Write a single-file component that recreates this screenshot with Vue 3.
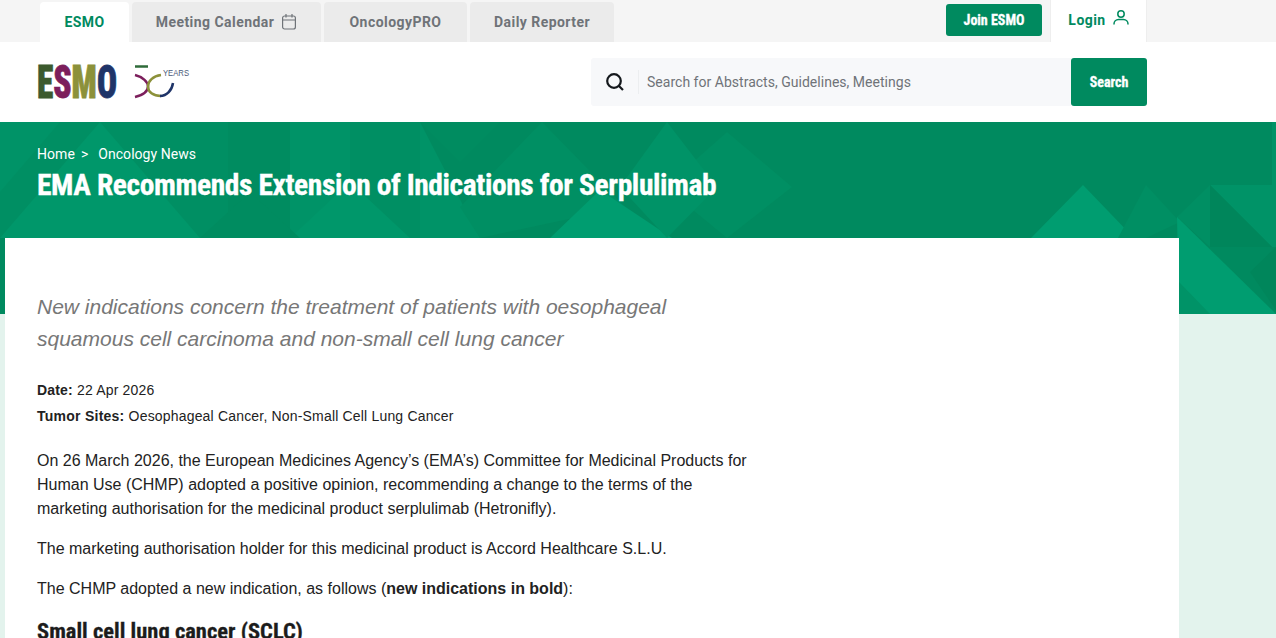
<template>
  <div class="page">
    <div class="topbar">
      <div class="tabs">
        <a class="tab active">ESMO</a>
        <a class="tab cal">Meeting Calendar
          <svg width="16" height="18" viewBox="0 0 16 18" fill="none" stroke="#6f7378" stroke-width="1.2">
            <rect x="1.6" y="3" width="12.8" height="13" rx="2" />
            <path d="M1.6 7h12.8M5 1v3.4M11 1v3.4" />
          </svg>
        </a>
        <a class="tab oncology">OncologyPRO</a>
        <a class="tab reporter">Daily Reporter</a>
      </div>
      <div class="top-right">
        <button class="join narrow">Join ESMO</button>
        <a class="login">Login
          <svg class="user" width="16" height="15" viewBox="0 0 16 15" fill="none" stroke="#008a5f" stroke-width="1.5">
            <circle cx="8" cy="4" r="3.200" />
            <path d="M1 14.500V14c0-2.500 2-4.500 4.500-4.500h5c2.500 0 4.500 2 4.500 4.500v.5" />
          </svg>
        </a>
      </div>
    </div>

    <header class="header">
      <div class="logo">
        <svg class="logo-svg" width="154" height="36" viewBox="0 0 154 36">
          <text x="0" y="34" class="mark" textLength="80" lengthAdjust="spacingAndGlyphs"><tspan fill="#3c5a2e" stroke="#3c5a2e">E</tspan><tspan fill="#7c1f5c" stroke="#7c1f5c">S</tspan><tspan fill="#8c913a" stroke="#8c913a">M</tspan><tspan fill="#1f3468" stroke="#1f3468">O</tspan></text>
          <path d="M98 2.500h13" stroke="#2f6b3a" stroke-width="2.500" />
          <path d="M98 11c8 2 13 7 13 11.500S106 31 98 33" fill="none" stroke="#7c1f5c" stroke-width="2.500" />
          <path d="M124 11c-8 1-13 6-13 11.500S116 32 124 32" fill="none" stroke="#8c913a" stroke-width="2.500" />
          <path d="M136 19c-1 7-6 13-13 13" fill="none" stroke="#1f3468" stroke-width="2.500" />
          <text x="126" y="12" class="years" textLength="26" lengthAdjust="spacingAndGlyphs">YEARS</text>
        </svg>
      </div>
      <div class="search">
        <div class="search-box">
          <span class="search-icon">
            <svg width="20" height="20" viewBox="0 0 20 20" fill="none" stroke="#14181c" stroke-width="2.200">
              <circle cx="9" cy="9" r="6.800" />
              <path d="M13.500 13.500L18 18" />
            </svg>
          </span>
          <input class="search-input" placeholder="Search for Abstracts, Guidelines, Meetings" />
        </div>
        <button class="search-btn narrow">Search</button>
      </div>
    </header>

    <section class="hero">
      <svg class="pattern" width="1276" height="192" viewBox="0 0 1276 192">
        <polygon v-for="(p, i) in shapes" :key="i" :points="p.pts" :fill="p.fill" />
      </svg>
      <div class="hero-text">
        <div class="crumbs"><span>Home</span><span class="sep">&gt;</span><span>Oncology News</span></div>
        <h1 class="narrow">EMA Recommends Extension of Indications for Serplulimab</h1>
      </div>
    </section>

    <main class="card">
      <p class="lead">New indications concern the treatment of patients with oesophageal squamous cell carcinoma and non-small cell lung cancer</p>
      <div class="meta"><b>Date:</b> 22 Apr 2026</div>
      <div class="meta sites"><b>Tumor Sites:</b> Oesophageal Cancer, Non-Small Cell Lung Cancer</div>
      <div class="body">
        <p>On 26 March 2026, the European Medicines Agency’s (EMA’s) Committee for Medicinal Products for Human Use (CHMP) adopted a positive opinion, recommending a change to the terms of the marketing authorisation for the medicinal product serplulimab (Hetronifly).</p>
        <p>The marketing authorisation holder for this medicinal product is Accord Healthcare S.L.U.</p>
        <p>The CHMP adopted a new indication, as follows (<b>new indications in bold</b>):</p>
        <h2 class="narrow">Small cell lung cancer (SCLC)</h2>
      </div>
    </main>
  </div>
</template>

<script setup>
const light = '#009d70'
const faint = '#00976a'
const mid = '#009367'
const soft = '#008f63'
const shade = '#008c60'
const dark = '#00865b'

const shapes = [
  // left group
  { pts: '0,0 420,0 420,116 0,116', fill: soft },
  { pts: '100,0 200,116 0,116', fill: faint },
  { pts: '0,0 60,0 0,70', fill: mid },
  { pts: '228,0 290,0 290,116 228,116', fill: shade },
  { pts: '290,0 350,0 350,116 290,116', fill: mid },
  { pts: '350,60 410,116 290,116', fill: faint },
  { pts: '200,116 250,70 300,116', fill: shade },
  // middle group
  { pts: '420,0 500,0 460,40', fill: shade },
  { pts: '420,0 420,116 480,116', fill: mid },
  { pts: '542,0 625,85 480,116 460,85', fill: soft },
  { pts: '600,68 672,116 550,116', fill: light },
  { pts: '727,10 792,65 727,116 665,65', fill: soft },
  { pts: '667,0 717,65 667,116 620,65', fill: mid },
  // right group
  { pts: '1083,63 1134,116 1031,116', fill: light },
  { pts: '1146,63 1180,100 1146,116 1118,116', fill: soft },
  { pts: '1210,63 1177,95 1210,125', fill: soft },
  { pts: '1210,63 1272,63 1272,125', fill: mid },
  { pts: '1210,63 1272,125 1210,125', fill: dark },
  { pts: '1177,95 1276,192 1179,192', fill: light },
  { pts: '1179,160 1210,192 1179,192', fill: mid },
  { pts: '1276,125 1250,150 1276,188', fill: dark },
  { pts: '1272,0 1276,0 1276,125 1272,125', fill: mid }
]
</script>

<style>
body { background: #fff; }
</style>

<style scoped>
.page {
  height: 638px;
  overflow: hidden;
  background: #e3f3ed;
  font-family: "Liberation Sans", Arial, sans-serif;
  color: #222;
}
.narrow {
  font-family: "Liberation Sans Narrow", "Roboto Condensed", "Liberation Sans", sans-serif;
  font-weight: 700;
  -webkit-text-stroke: 0.3px currentColor;
}
.topbar {
  height: 42px;
  background: #f5f5f5;
  display: flex;
  justify-content: space-between;
  padding: 0 129px 0 40px;
}
.tabs {
  display: flex;
  align-items: flex-end;
  gap: 3px;
}
.tab {
  height: 40px;
  display: flex;
  align-items: center;
  justify-content: center;
  gap: 7px;
  background: #ebebeb;
  border-radius: 4px 4px 0 0;
  color: #6f7378;
  font-family: Roboto, sans-serif;
  font-weight: 700;
  font-size: 14px;
  letter-spacing: 0.45px;
}
.tab.active { width: 89px; background: #fff; color: #008a5f; }
.tab.cal { width: 189px; }
.tab.oncology { width: 143px; }
.tab.reporter { width: 144px; }
.top-right {
  display: flex;
  gap: 8px;
}
.join {
  width: 96px;
  height: 32px;
  margin-top: 4px;
  border: 0;
  border-radius: 3px;
  background: #008a5f;
  color: #fff;
  font-size: 14px;
}
.login {
  width: 97px;
  display: flex;
  align-items: center;
  justify-content: center;
  gap: 7px;
  padding-bottom: 3px;
  box-sizing: border-box;
  background: #fff;
  border: 1px solid #eeeeee;
  border-width: 0 1px;
  color: #008a5f;
  font-family: Roboto, sans-serif;
  font-weight: 700;
  font-size: 14px;
  letter-spacing: 0.45px;
}
.user { margin-top: -5px; }
.header {
  height: 80px;
  background: #fff;
  display: flex;
  align-items: center;
  justify-content: space-between;
  padding: 0 129px 0 37px;
}
.logo { display: flex; height: 36px; }
.logo-svg { overflow: visible; }
.mark {
  font-family: "Roboto Condensed", Roboto, sans-serif;
  font-weight: 900;
  font-size: 46px;
  stroke-width: 0.8px;
}
.years {
  font-family: "Liberation Sans", sans-serif;
  font-size: 9px;
  fill: #4a5a78;
}
.search {
  display: flex;
  width: 556px;
  height: 48px;
}
.search-box {
  flex: 1;
  display: flex;
  align-items: center;
  background: #f7f8fa;
  border-radius: 3px 0 0 3px;
}
.search-icon {
  width: 47px;
  height: 24px;
  display: flex;
  align-items: center;
  justify-content: center;
  border-right: 1px solid #eceef0;
}
.search-input {
  flex: 1;
  border: 0;
  outline: 0;
  background: transparent;
  padding: 0 8px;
  font-family: Roboto, sans-serif;
  font-size: 14px;
  letter-spacing: 0.02px;
}
.search-input::placeholder { color: #6f7378; opacity: 1; }
.search-btn {
  width: 76px;
  border: 0;
  border-radius: 3px;
  background: #008a5f;
  color: #fff;
  font-size: 14px;
}
.hero {
  position: relative;
  height: 192px;
  background: #008a5f;
  overflow: hidden;
}
.pattern { position: absolute; left: 0; top: 0; }
.hero-text {
  position: relative;
  padding: 24px 37px 0;
  color: #fff;
}
.crumbs {
  font-family: Roboto, sans-serif;
  font-size: 14px;
  line-height: 16px;
  letter-spacing: 0.05px;
}
.sep { margin: 0 10px 0 6px; }
h1 {
  margin: 5px 0 0;
  font-size: 29.500px;
  letter-spacing: -0.4px;
  line-height: 36px;
}
.card {
  position: relative;
  box-sizing: border-box;
  width: 1174px;
  margin: -76px 0 0 5px;
  padding: 53px 0 0 32px;
  background: #fff;
  height: 500px;
}
.lead {
  width: 700px;
  margin: 0 0 25px;
  font-size: 21px;
  line-height: 32px;
  font-style: italic;
  color: #777;
}
.meta {
  font-size: 14px;
  line-height: 20px;
  margin-bottom: 6px;
  letter-spacing: 0.18px;
}
.sites b { letter-spacing: 0.25px; }
.body {
  width: 720px;
  margin-top: 23px;
  font-size: 16px;
  line-height: 24px;
}
.body p { margin: 0 0 16px; }
h2 {
  margin: 0;
  font-size: 22.500px;
  line-height: 28px;
  color: #1c1c1c;
}
</style>
